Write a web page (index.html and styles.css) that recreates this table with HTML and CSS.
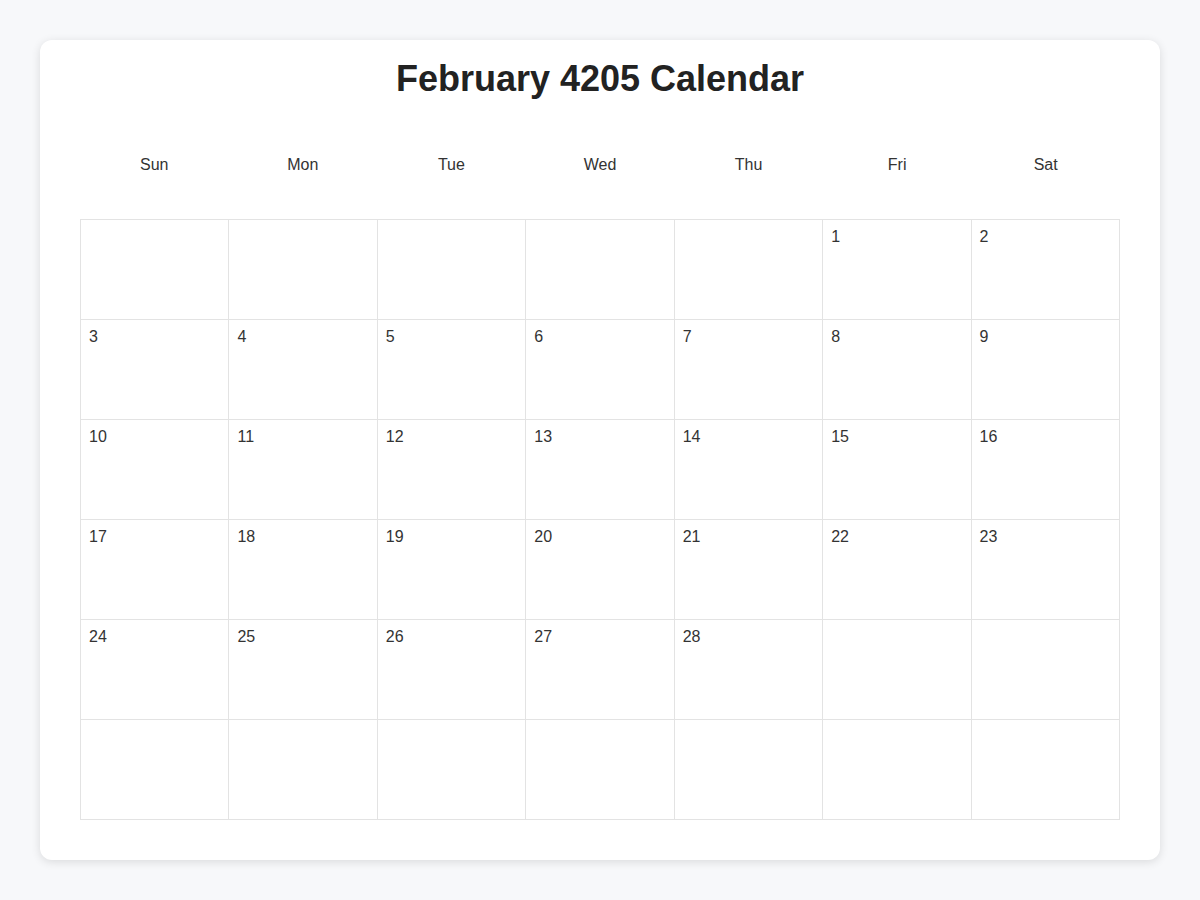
FILE: index.html
```html
<!DOCTYPE html>
<html lang="en">
<head>
<meta charset="utf-8">
<title>February 4205 Calendar</title>
<link rel="stylesheet" href="styles.css">
</head>
<body>
<div class="card">
  <h1 class="title">February 4205 Calendar</h1>
  <div class="weekdays">
    <div>Sun</div><div>Mon</div><div>Tue</div><div>Wed</div><div>Thu</div><div>Fri</div><div>Sat</div>
  </div>
  <div class="grid">
    <div class="cell"></div><div class="cell"></div><div class="cell"></div><div class="cell"></div><div class="cell"></div><div class="cell">1</div><div class="cell">2</div>
    <div class="cell">3</div><div class="cell">4</div><div class="cell">5</div><div class="cell">6</div><div class="cell">7</div><div class="cell">8</div><div class="cell">9</div>
    <div class="cell">10</div><div class="cell">11</div><div class="cell">12</div><div class="cell">13</div><div class="cell">14</div><div class="cell">15</div><div class="cell">16</div>
    <div class="cell">17</div><div class="cell">18</div><div class="cell">19</div><div class="cell">20</div><div class="cell">21</div><div class="cell">22</div><div class="cell">23</div>
    <div class="cell">24</div><div class="cell">25</div><div class="cell">26</div><div class="cell">27</div><div class="cell">28</div><div class="cell"></div><div class="cell"></div>
    <div class="cell"></div><div class="cell"></div><div class="cell"></div><div class="cell"></div><div class="cell"></div><div class="cell"></div><div class="cell"></div>
  </div>
</div>
</body>
</html>
```
FILE: styles.css
```css
html, body {
  margin: 0;
  padding: 0;
  background: #f7f8fa;
  font-family: "Liberation Sans", Arial, sans-serif;
  color: #333;
}
body {
  padding: 40px;
}
.card {
  background: #fff;
  border-radius: 12px;
  box-shadow: 0 2px 10px rgba(0, 0, 0, 0.12);
  padding: 20px 40px 40px;
}
.title {
  margin: 0;
  font-size: 36px;
  line-height: 37px;
  font-weight: bold;
  color: #222;
  text-align: center;
}
.weekdays {
  display: grid;
  grid-template-columns: repeat(7, 1fr);
  margin-top: 59px;
  margin-bottom: 45px;
  font-size: 16px;
  line-height: 18px;
  text-align: center;
  color: #333;
}
.grid {
  display: grid;
  grid-template-columns: repeat(7, 1fr);
  grid-auto-rows: 100px;
  border-top: 1px solid #e3e3e3;
  border-left: 1px solid #e3e3e3;
}
.cell {
  border-right: 1px solid #e3e3e3;
  border-bottom: 1px solid #e3e3e3;
  padding: 8px;
  font-size: 16px;
  line-height: 18px;
  color: #333;
}
```
